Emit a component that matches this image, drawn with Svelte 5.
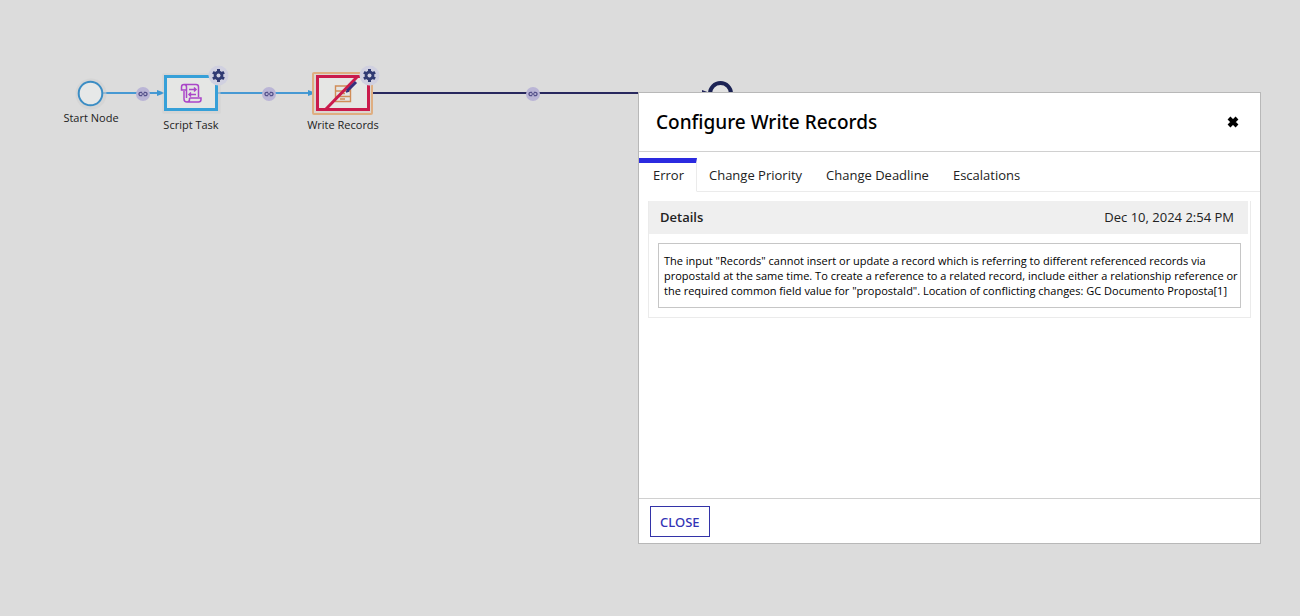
<script>
    const tabs = ['Error', 'Change Priority', 'Change Deadline', 'Escalations'];
    const details = {
        date: 'Dec 10, 2024 2:54 PM',
        message: 'The input "Records" cannot insert or update a record which is referring to different referenced records via propostaId at the same time. To create a reference to a related record, include either a relationship reference or the required common field value for "propostaId". Location of conflicting changes: GC Documento Proposta[1]'
    };

    const links = [[143, 94], [269, 94], [533, 94]];
    const gears = [[218.5, 75.5], [369.5, 75.5]];
    const labels = [
        { text: 'Start Node', x: 91, y: 122 },
        { text: 'Script Task', x: 191, y: 129 },
        { text: 'Write Records', x: 343, y: 129 }
    ];

    let active = $state('Error');
    let open = $state(true);
</script>

<main>
    <svg class="canvas" role="img" aria-label="Process diagram">
        <!-- flows -->
        <path class="flow" d="M103 93H163M218 93H314" />
        <path class="arrow" d="M157 90l8 3-8 3zM308 90l8 3-8 3z" />
        <path class="flow pending" d="M372 93H638" />
        <path class="arrow pending" d="M702 90l8 3-8 3z" />

        <!-- start and end -->
        <circle class="halo" cx="91" cy="94" r="13" />
        <circle class="start" cx="90.5" cy="93.5" r="11.8" />
        <circle class="end" cx="720.5" cy="93.5" r="10.5" />

        <!-- script task -->
        <rect class="halo" x="165" y="76" width="53" height="35" />
        <rect class="task" x="165.5" y="76.5" width="51" height="33" />
        <g class="script">
            <path d="M186.500 90h-5v-3q0-2.500 2.500-2.500h12q2.500 0 2.500 2.500v10M184 84.500q2.500 0 2.500 2.500v11M189.500 98h11.500v1.500q0 2.500-2.500 2.500h-11.500q-3 0-3-3v-8M189.500 98v1.500q0 2.500-2.500 2.500" />
            <path d="M189 89.500h7M194 87.500l2 2-2 2M196 94.500h-7M191 92.500l-2 2 2 2" />
        </g>

        <!-- write records -->
        <rect class="selection" x="313" y="73" width="59" height="41" rx="1" />
        <rect class="task failed" x="317.500" y="76.500" width="51" height="33" />
        <path class="drawer" d="M335.500 86h15v5h-15zM335.500 91h15v5.500h-15zM335.500 96.500h15v5h-15zM340 93.500h5M340 99h5" />
        <path class="slash" d="M326 109L358 76" />
        <path class="pen" d="M347 91l9-9" />
        <path class="pen-tip" d="M346 92l3-1" />

        {#each links as [x, y]}
            <g transform="translate({x} {y})">
                <circle class="badge" r="7" />
                <path class="chain" d="M-.8 -1.700h-1.500a1.700 1.700 0 1 0 0 3.400h1.500M.8 -1.700h1.500a1.700 1.700 0 1 1 0 3.400h-1.500M-1.500 0h3" />
            </g>
        {/each}

        {#each gears as [x, y]}
            <g transform="translate({x} {y})">
                <circle class="gear-bg" r="10" />
                <path class="teeth" d="M0 -6.500V6.500M-5.600 -3.200L5.600 3.200M-5.600 3.200L5.600 -3.200" />
                <circle class="gear" r="4.8" />
                <circle class="hole" r="2" />
            </g>
        {/each}

        {#each labels as label}
            <text x={label.x} y={label.y}>{label.text}</text>
        {/each}
    </svg>

    {#if open}
        <div class="dialog" role="dialog" aria-labelledby="dialog-title">
            <header>
                <h1 id="dialog-title">Configure Write Records</h1>
                <button class="dismiss" aria-label="Close dialog" onclick={() => open = false}>
                    <svg width="12" height="12" viewBox="0 0 12 12"><path d="M2 2l8 8M10 2l-8 8" /></svg>
                </button>
            </header>

            <div class="tabs" role="tablist">
                {#each tabs as tab}
                    <button class="tab" class:active={tab === active} role="tab" aria-selected={tab === active} onclick={() => active = tab}>{tab}</button>
                {/each}
            </div>

            <div class="body">
                {#if active === 'Error'}
                    <section class="panel">
                        <div class="panel-head">
                            <h2>Details</h2>
                            <time>{details.date}</time>
                        </div>
                        <p class="message">{details.message}</p>
                    </section>
                {/if}
            </div>

            <footer>
                <button class="close" onclick={() => open = false}>CLOSE</button>
            </footer>
        </div>
    {/if}
</main>

<style>
    :global(body) {
        background: #dcdcdc;
    }

    main {
        position: relative;
        min-height: 100vh;
        overflow: hidden;
        font-family: "Open Sans", "Noto Sans", sans-serif;
        font-size: 13px;
        color: #222;
    }

    .canvas {
        position: absolute;
        inset: 0;
        width: 100%;
        height: 100%;
        fill: none;
    }

    .canvas text {
        fill: #222;
        font-size: 11px;
        text-anchor: middle;
    }

    .flow {
        stroke: #4799d3;
        stroke-width: 2;
    }
    .flow.pending {
        stroke: #28285e;
    }
    .arrow {
        fill: #3b96d2;
    }
    .arrow.pending {
        fill: #20235a;
    }

    .halo {
        stroke: #d0d0d0;
        stroke-width: 5;
        opacity: 0.6;
    }
    .start {
        fill: #e6e8e8;
        stroke: #3b8dc4;
        stroke-width: 2;
    }
    .end {
        fill: #e2e2e2;
        stroke: #1c2354;
        stroke-width: 4;
    }
    .task {
        fill: #e5e6e4;
        stroke: #36a0d8;
        stroke-width: 3;
    }
    .task.failed {
        stroke: #ca1b4c;
    }
    .selection {
        fill: #dcd6cf;
        stroke: #dfae81;
        stroke-width: 2;
    }

    .script {
        stroke: #aa46c8;
        stroke-width: 1.5;
    }
    .drawer {
        stroke: #d08d57;
        stroke-width: 1.4;
    }
    .pen {
        stroke: #35307d;
        stroke-width: 3;
    }
    .pen-tip {
        stroke: #35307d;
        stroke-width: 1.5;
    }
    .slash {
        stroke: #ca1b4c;
        stroke-width: 3;
    }

    .badge {
        fill: #bab5d6;
    }
    .chain {
        stroke: #55518b;
        stroke-width: 1.3;
    }
    .gear-bg {
        fill: #d0d0e0;
    }
    .gear {
        fill: #303a73;
    }
    .teeth {
        stroke: #303a73;
        stroke-width: 3;
    }
    .hole {
        fill: #d0d0e0;
    }

    .dialog {
        position: absolute;
        inset: 92px 39px 72px 638px;
        display: flex;
        flex-direction: column;
        border: 1px solid #b8b8b8;
        background: #fff;
    }

    header {
        display: flex;
        align-items: center;
        justify-content: space-between;
        height: 58px;
        padding: 0 21px 0 17px;
        border-bottom: 1px solid #d0d0d0;
    }

    h1 {
        margin: 0;
        font-family: "Noto Sans", "Open Sans", sans-serif;
        font-size: 19px;
        font-weight: 500;
        color: #000;
    }

    button {
        font: inherit;
        cursor: pointer;
    }

    .dismiss {
        display: flex;
        padding: 0;
        border: 0;
        background: none;
    }
    .dismiss path {
        stroke: #000;
        stroke-width: 4;
    }

    .tabs {
        display: flex;
        height: 34px;
        padding-top: 6px;
    }

    .tab {
        box-sizing: border-box;
        padding: 0 12px 4px;
        border: 0;
        border-top: 5px solid transparent;
        border-bottom: 1px solid #ebebeb;
        background: none;
        color: #222;
    }
    .tab.active {
        border-top-color: #2b2ae0;
        border-right: 1px solid #ebebeb;
        border-bottom-color: #fff;
        padding-left: 14px;
    }
    .tabs::after {
        content: '';
        flex: 1;
        border-bottom: 1px solid #ebebeb;
    }

    .body {
        flex: 1;
        padding: 9px;
    }

    .panel {
        border: 1px solid #ebebeb;
        border-top: 0;
    }

    .panel-head {
        display: flex;
        align-items: center;
        justify-content: space-between;
        box-sizing: border-box;
        height: 33px;
        margin-right: 2px;
        padding: 0 14px 2px 11px;
        background: #efefef;
    }

    h2 {
        margin: 0;
        font-size: 13px;
        font-weight: 600;
    }

    .message {
        margin: 9px;
        padding: 9px 2px 9px 5px;
        border: 1px solid #c6c6c6;
        font-size: 11px;
        line-height: 15px;
        color: #000;
    }

    footer {
        padding: 7px 11px 6px;
        border-top: 1px solid #d0d0d0;
    }

    .close {
        display: block;
        height: 31px;
        padding: 0 9px;
        border: 1px solid #3333a8;
        background: #fff;
        font-family: "Noto Sans", "Open Sans", sans-serif;
        font-size: 13px;
        font-weight: 500;
        color: #3333b5;
    }
</style>
